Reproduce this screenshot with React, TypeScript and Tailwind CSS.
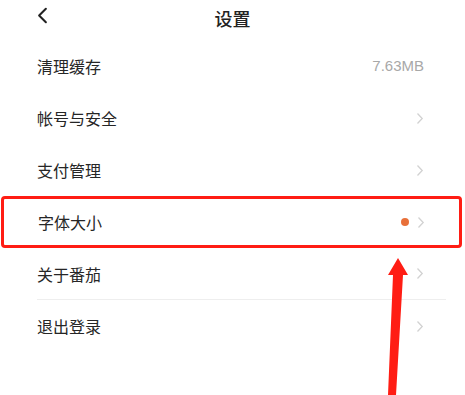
import { ChevronLeft } from 'lucide-react';

const rows = [
  { label: '清理缓存', value: '7.63MB' },
  { label: '帐号与安全' },
  { label: '支付管理' },
  { label: '字体大小', dot: true, boxed: true },
  { label: '关于番茄', divider: true },
  { label: '退出登录' },
];

function Chevron() {
  return (
    <svg width="8" height="13" viewBox="0 0 8 13" className="shrink-0">
      <path d="M1.5 1.5 L6.2 6.5 L1.5 11.5" fill="none" stroke="#d2d2d2" strokeWidth="1.3" />
    </svg>
  );
}

export default function App() {
  return (
    <div
      className="relative w-[465px] h-[395px] overflow-hidden bg-white text-[#262626]"
      style={{ fontFamily: '"Noto Sans CJK SC", "Liberation Sans", sans-serif' }}
    >
      {/* Header */}
      <div className="relative flex h-[36px] items-center justify-center">
        <ChevronLeft size={27} strokeWidth={1.8} className="absolute left-[29px] top-[2px] text-[#222]" />
        <span className="text-[18px] font-medium text-[#222]">设置</span>
      </div>

      {/* Rows */}
      <div className="mt-[4px]">
        {rows.map((row, i) => (
          <div
            key={i}
            className={
              row.boxed
                ? 'ml-[1px] mr-[3px] flex h-[52px] items-center border-[3px] border-[#ff1d14] rounded-[4px] pl-[34px] pr-[34px]'
                : 'ml-[37px] mr-[19px] pr-[22px] flex h-[52px] items-center ' +
                  (row.divider ? 'border-b border-[#eeeeee]' : '')
            }
          >
            <span className="flex-1 text-[16px] leading-none">{row.label}</span>
            {row.value ? (
              <span className="text-[15px] text-[#a8a8a8]" style={{ fontFamily: '"Liberation Sans", sans-serif' }}>
                {row.value}
              </span>
            ) : (
              <div className="flex items-center gap-[8px]">
                {row.dot && <span className="h-[8px] w-[8px] rounded-full bg-[#e8703a]" />}
                <Chevron />
              </div>
            )}
          </div>
        ))}
      </div>

      {/* Annotation arrow */}
      <svg className="absolute left-0 top-0" width="465" height="395" viewBox="0 0 465 395">
        <polygon points="398,258 408,275 403,275 396,395 388,395 393,275 388,275" fill="#ff1d14" />
      </svg>
    </div>
  );
}
